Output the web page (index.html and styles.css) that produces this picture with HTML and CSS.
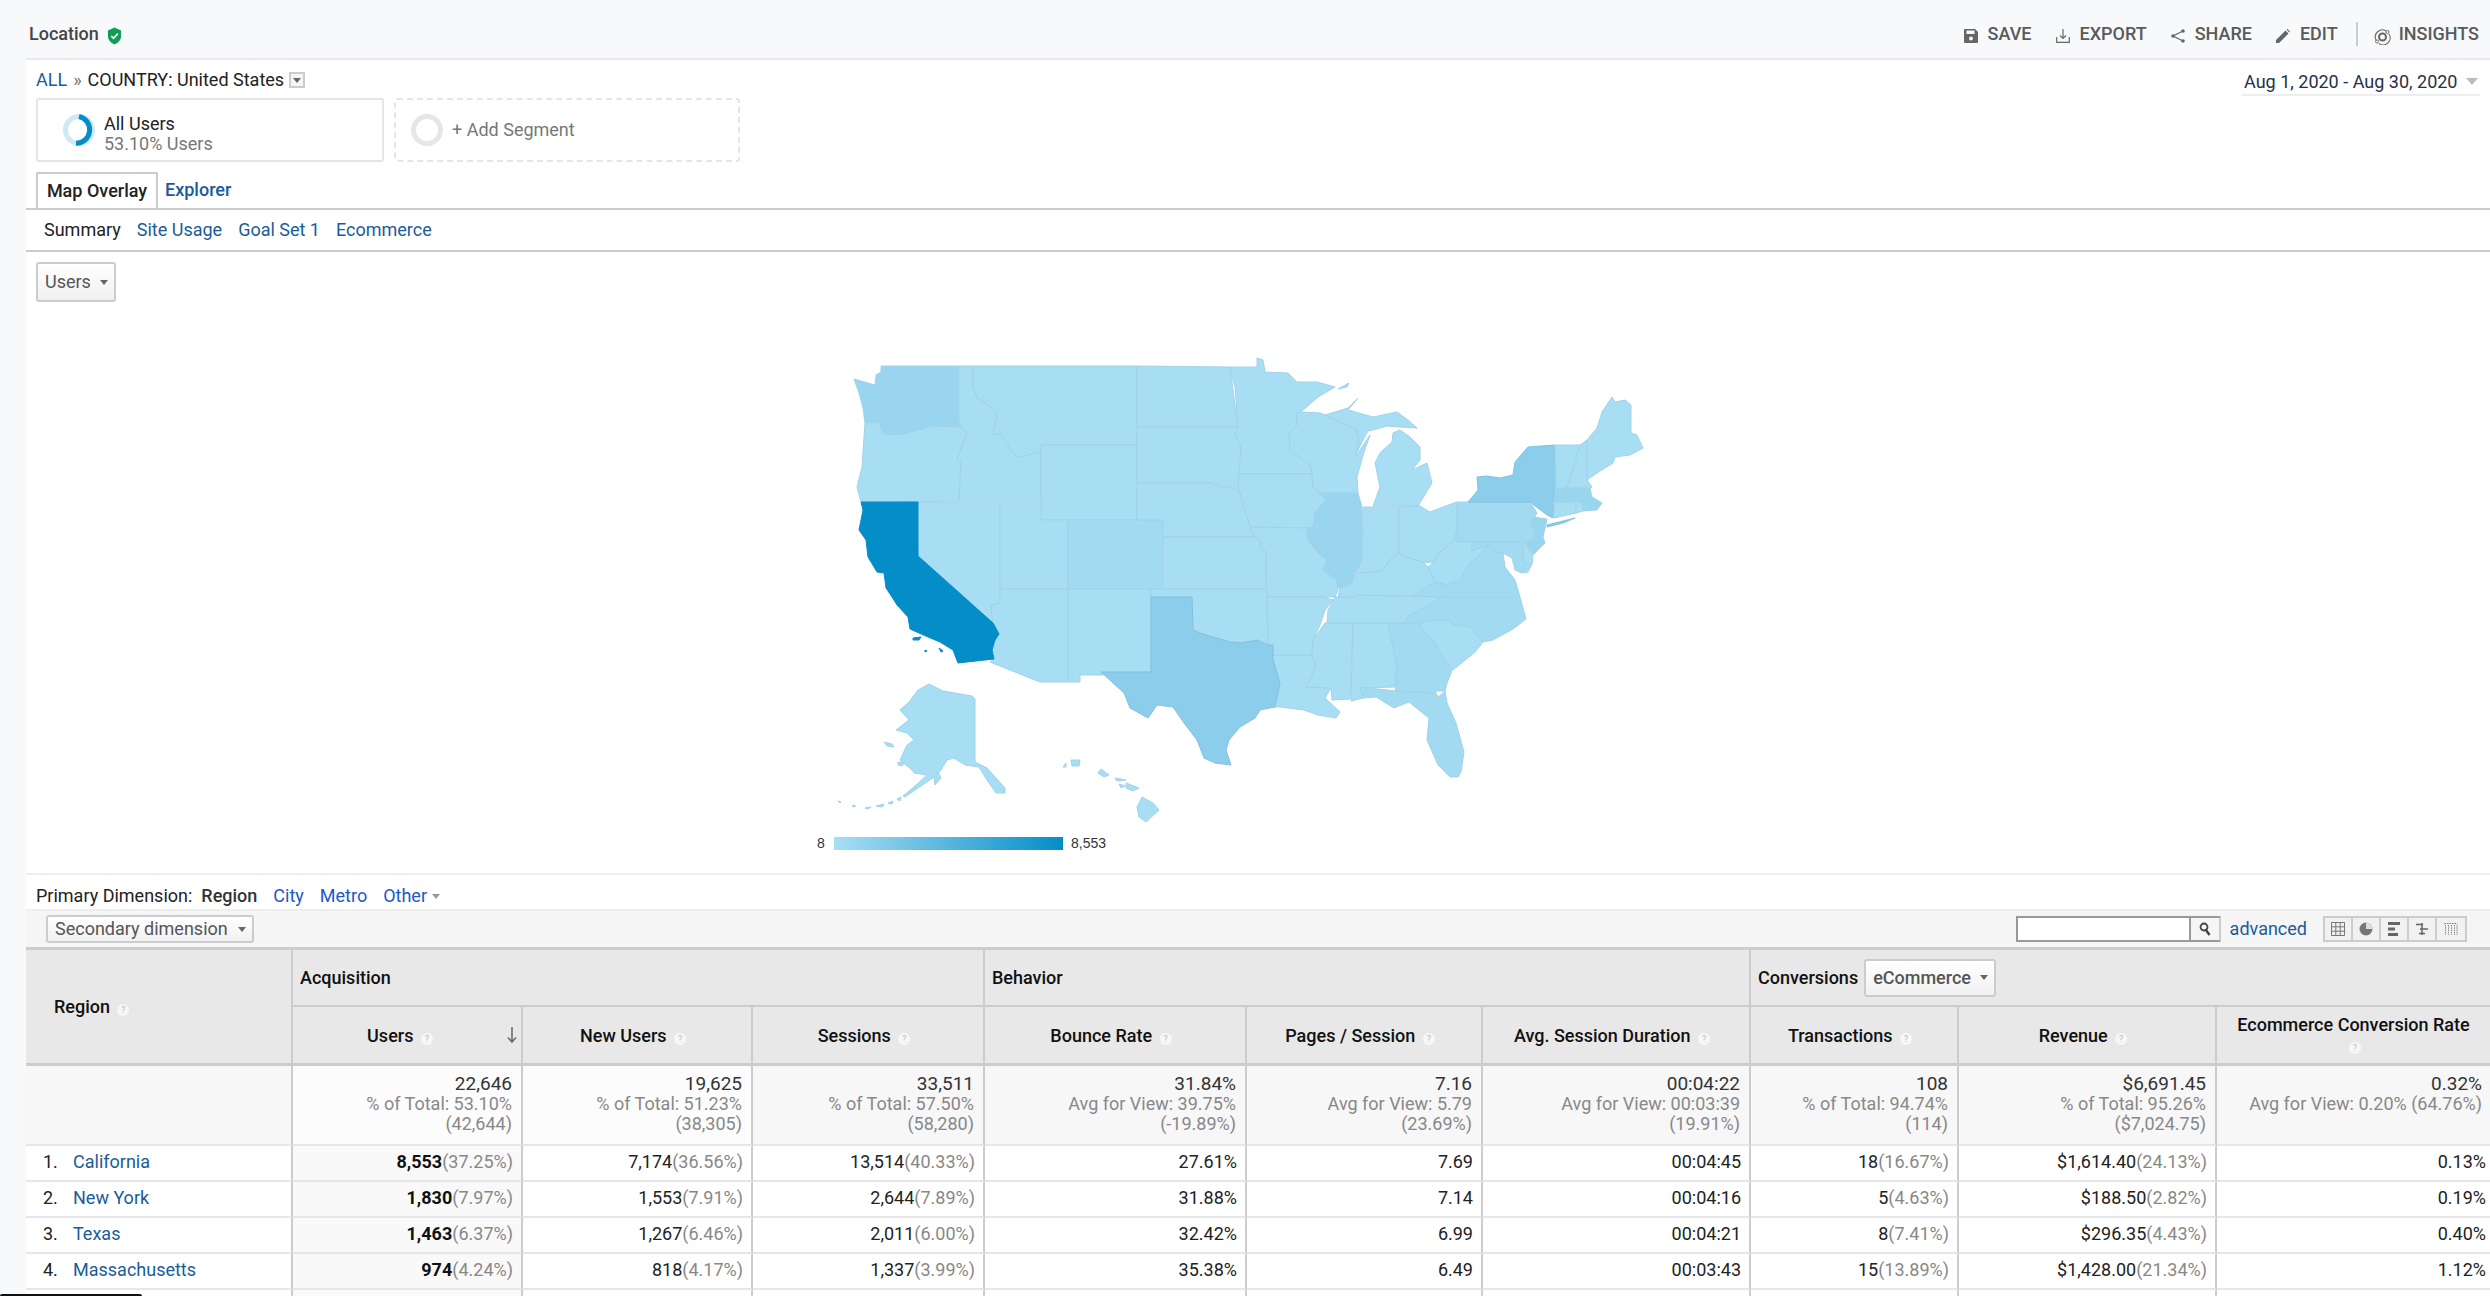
FILE: index.html
```html
<!DOCTYPE html>
<html lang="en">
<head>
<meta charset="utf-8">
<title>Location</title>
<link rel="stylesheet" href="styles.css">
</head>
<body>
<div class="page">
  <aside class="rail"></aside>
  <main class="main">
    <header class="topbar">
      <div class="title">Location
        <svg class="shield" viewBox="0 0 16 18"><path d="M8 0 15 3v6c0 4-3 7.500-7 9-4-1.500-7-5-7-9V3z" fill="#0f9d58"/><path d="m4.500 9 2.500 2.500L11.500 6.500" fill="none" stroke="#fff" stroke-width="1.800"/></svg>
      </div>
      <nav class="actions">
        <span class="action"><svg class="ico" viewBox="0 0 14 14"><path d="M1 0h10l3 3v10a1 1 0 0 1-1 1H1a1 1 0 0 1-1-1V1a1 1 0 0 1 1-1z" fill="#666"/><rect x="2.500" y="1.500" width="8" height="3.500" fill="#f8f9fa"/><circle cx="7" cy="9.500" r="2" fill="#f8f9fa"/></svg>SAVE</span>
        <span class="action"><svg class="ico" viewBox="0 0 14 14"><path d="M7 0v9M4 6.500l3 3 3-3M.7 8v5.300h12.600V8" fill="none" stroke="#666" stroke-width="1.200"/></svg>EXPORT</span>
        <span class="action"><svg class="ico" viewBox="0 0 14 14"><path d="M12 2 2 7l10 5" fill="none" stroke="#666" stroke-width="1.300"/><circle cx="12" cy="2" r="1.800" fill="#666"/><circle cx="2" cy="7" r="1.800" fill="#666"/><circle cx="12" cy="12" r="1.800" fill="#666"/></svg>SHARE</span>
        <span class="action"><svg class="ico" viewBox="0 0 14 14"><path d="M0 14V11L9.500 1.500l3 3L3 14zM10.500.500l1-.5 2.500 2.500-.5 1z" fill="#666"/></svg>EDIT</span>
        <span class="divider"></span>
        <span class="action insights"><svg class="ico big" viewBox="0 0 17 17"><circle cx="8.500" cy="9" r="3.500" fill="none" stroke="#666" stroke-width="2"/><path d="M2 12A7 7 0 0 1 12 3M15 6a7 7 0 0 1-10 9.500" fill="none" stroke="#666" stroke-width="1.100"/><circle cx="13.500" cy="4" r="1.500" fill="none" stroke="#666"/><circle cx="3" cy="13.500" r="1.500" fill="none" stroke="#666"/></svg>INSIGHTS</span>
      </nav>
    </header>

    <section class="context">
      <div class="context-left">
        <div class="crumb"><a class="link">ALL</a><span class="raquo">»</span><span>COUNTRY: United States</span><span class="crumb-drop"><i class="caret"></i></span></div>
        <div class="segments">
          <div class="segment">
            <svg class="ring" viewBox="0 0 32 34"><circle cx="16" cy="17" r="13.500" fill="none" stroke="#cfe9f5" stroke-width="5"/><path d="M16 3.500A13.500 13.500 0 0 1 13 30.200" fill="none" stroke="#058dc7" stroke-width="5"/></svg>
            <div class="seg-text"><div>All Users</div><div class="muted">53.10% Users</div></div>
          </div>
          <div class="segment dashed">
            <svg class="ring" viewBox="0 0 32 34"><circle cx="16" cy="17" r="13.500" fill="none" stroke="#e6e6e6" stroke-width="5"/></svg>
            <div class="muted">+ Add Segment</div>
          </div>
        </div>
      </div>
      <div class="date"><span>Aug 1, 2020 - Aug 30, 2020</span><i class="date-caret"></i></div>
    </section>

    <div class="tabs"><span class="tab active">Map Overlay</span><span class="tab link">Explorer</span></div>
    <div class="subtabs"><span>Summary</span><a class="link">Site Usage</a><a class="link">Goal Set 1</a><a class="link">Ecommerce</a></div>

    <section class="map-panel">
      <button class="btn metric">Users<i class="caret"></i></button>
      <svg class="map" viewBox="800 340 860 520" width="860" height="520">
        <defs><linearGradient id="scale"><stop offset="0" stop-color="#a8def4"/><stop offset="1" stop-color="#058dc7"/></linearGradient></defs>
        <g class="states">
          <polygon class="c2" points="959,366 959,420 961,427 933,426 903,434 888,435 882,432 879,423 865,423 863,408 859,393 854,379 875,385 876,375 881,372 881,366"/>
          <polygon points="865,423 879,423 882,432 888,435 903,434 933,426 961,427 967,434 957,458 961,463 959,501 861,502 857,487 862,467 864,437"/>
          <polygon points="918,502 1000,502 1000,603 991,605 993,623 918,556"/>
          <polygon points="959,366 973,366 973,387 978,399 988,405 997,415 993,435 1000,433 1010,448 1017,457 1033,454 1037,451 1041,455 1041,501 959,501 961,463 957,458 967,434 961,427 959,420"/>
          <polygon points="973,366 1137,366 1137,445 1041,445 1041,455 1037,451 1033,454 1017,457 1010,448 1000,433 993,435 997,415 988,405 978,399 973,387"/>
          <polygon points="1041,445 1137,445 1137,520 1041,520"/>
          <polygon points="1000,502 1041,502 1041,520 1068,520 1068,589 1000,589"/>
          <polygon class="c1" points="1068,520 1163,520 1163,589 1068,589"/>
          <polygon points="1000,589 1068,589 1068,682 1040,682 990,662 994,659 992,650 995,640 999,634 993,623 991,605 1000,603"/>
          <polygon points="1068,589 1151,589 1151,672 1102,672 1103,675 1080,675 1080,682 1068,682"/>
          <polygon points="1137,366 1230,367 1232,383 1237,420 1238,427 1137,427"/>
          <polygon points="1137,427 1238,427 1235,435 1241,440 1241,474 1238,487 1240,493 1230,487 1220,487 1212,483 1137,483"/>
          <polygon points="1137,483 1212,483 1220,487 1230,487 1240,493 1247,513 1255,537 1163,537 1163,520 1137,520"/>
          <polygon points="1163,537 1255,537 1262,542 1260,547 1266,552 1266,589 1163,589"/>
          <polygon points="1151,589 1266,589 1267,600 1268,645 1257,640 1242,643 1230,642 1213,637 1200,633 1193,630 1192,597 1151,597"/>
          <polygon points="1273,655 1312,655 1316,667 1306,687 1331,688 1325,698 1340,712 1336,718 1318,715 1304,710 1280,707 1275,707 1280,683 1273,660"/>
          <polygon points="1232,377 1230,367 1257,367 1257,358 1263,360 1265,372 1288,373 1297,382 1317,382 1335,387 1318,397 1301,412 1297,413 1297,425 1289,433 1290,450 1310,465 1312,474 1239,474 1241,447 1235,433 1238,427 1235,387"/>
          <polygon points="1239,474 1312,474 1313,487 1326,500 1315,512 1313,527 1307,528 1250,527 1245,510 1240,493 1238,485"/>
          <polygon points="1250,527 1307,528 1308,540 1320,555 1327,560 1323,570 1337,580 1338,590 1335,597 1328,597 1325,606 1323,597 1267,597 1266,552 1260,547 1262,542 1255,537"/>
          <polygon points="1267,597 1323,597 1333,600 1325,610 1320,625 1313,640 1312,655 1273,655 1273,645 1268,645"/>
          <polygon points="1325,623 1353,623 1350,699 1332,700 1331,688 1306,687 1316,667 1312,655 1313,640"/>
          <polygon points="1353,623 1388,623 1397,668 1395,687 1360,688 1363,698 1351,701"/>
          <polygon class="c1" points="1388,623 1420,622 1423,630 1433,640 1443,657 1453,668 1447,683 1445,691 1436,691 1435,695 1396,691 1395,687 1397,668"/>
          <polygon points="1418,623 1433,620 1450,620 1453,625 1470,626 1483,642 1475,652 1453,670 1443,657 1433,640 1423,630"/>
          <polygon class="c1" points="1442,597 1520,597 1526,619 1513,629 1493,640 1483,642 1470,626 1453,625 1450,620 1433,620 1418,623 1405,623 1408,616 1427,606"/>
          <polygon points="1327,623 1405,623 1408,616 1427,606 1442,597 1355,595 1354,597 1335,597 1328,610"/>
          <polygon points="1338,597 1355,597 1354,595 1413,596 1430,585 1435,582 1428,567 1423,562 1407,557 1399,553 1390,560 1383,570 1373,572 1357,573 1350,585 1340,588"/>
          <polygon class="c2" points="1320,493 1358,493 1362,507 1362,558 1357,570 1350,585 1340,588 1338,588 1337,580 1323,570 1327,560 1320,555 1308,540 1307,528 1313,527 1315,512 1326,500"/>
          <polygon points="1297,413 1301,412 1320,413 1325,415 1357,430 1359,440 1356,456 1370,435 1363,455 1357,477 1358,493 1320,493 1313,487 1312,474 1310,465 1290,450 1289,433 1297,425"/>
          <polygon points="1325,415 1348,408 1358,398 1348,410 1373,417 1397,412 1408,420 1417,428 1400,427 1387,426 1373,430 1368,431 1363,440 1356,454 1359,440 1357,430"/>
          <polygon points="1393,433 1400,430 1410,437 1420,447 1420,460 1412,470 1427,463 1432,483 1418,506 1373,506 1380,487 1375,463 1380,453 1392,442"/>
          <polygon points="1338,389 1349,383 1347,387"/>
          <polygon points="1363,507 1399,507 1399,553 1390,560 1383,570 1373,572 1357,573 1362,558"/>
          <polygon points="1399,507 1420,506 1430,512 1443,507 1457,502 1457,527 1455,540 1440,552 1433,563 1423,562 1407,557 1399,553"/>
          <polygon class="c1" points="1457,502 1468,502 1530,502 1537,513 1531,523 1536,537 1530,542 1457,542"/>
          <polygon class="c3" points="1468,502 1478,490 1477,477 1487,476 1500,478 1513,475 1515,462 1528,447 1555,445 1556,473 1553,518 1547,515 1530,502"/>
          <polygon class="c3" points="1547,525 1575,518 1563,523 1547,527"/>
          <polygon points="1457,527 1457,542 1472,542 1472,551 1487,545 1478,557 1470,563 1460,580 1447,585 1435,582 1428,567 1433,563 1440,552 1455,540"/>
          <polygon class="c1" points="1487,545 1495,552 1503,553 1505,567 1515,580 1520,597 1442,597 1413,596 1430,585 1435,582 1447,585 1460,580 1470,563 1478,557"/>
          <polygon class="c1" points="1472,542 1522,542 1524,563 1532,564 1528,572 1522,573 1515,570 1512,558 1503,553 1495,552 1487,544 1472,551"/>
          <polygon points="1523,542 1525,542 1533,557 1532,564 1524,563"/>
          <polygon class="c2" points="1533,517 1547,519 1543,537 1545,543 1533,555 1525,543 1536,537 1531,523"/>
          <polygon points="1554,502 1576,502 1576,513 1554,518"/>
          <polygon points="1576,502 1582,502 1583,511 1576,513"/>
          <polygon class="c2" points="1556,488 1590,488 1592,497 1602,503 1597,510 1583,511 1582,502 1554,502"/>
          <polygon points="1555,445 1580,445 1575,462 1567,488 1556,488"/>
          <polygon points="1580,445 1587,440 1587,480 1592,487 1590,488 1567,488 1575,462"/>
          <polygon points="1587,440 1597,428 1602,412 1612,397 1615,402 1625,400 1631,405 1631,433 1637,435 1643,448 1630,455 1615,457 1613,463 1597,473 1587,480"/>
          <polygon class="c1" points="1360,687 1396,691 1436,693 1438,697 1445,691 1447,703 1456,723 1464,752 1461,772 1458,777 1450,777 1438,765 1427,740 1429,718 1409,702 1394,708 1376,697 1363,698"/>
          <polygon class="c3" points="1151,597 1192,597 1193,630 1200,633 1213,637 1230,642 1242,643 1257,640 1268,645 1273,645 1273,660 1280,683 1275,707 1260,710 1255,718 1240,727 1229,740 1226,750 1231,765 1215,763 1204,758 1197,740 1184,723 1173,707 1157,705 1148,718 1130,708 1124,693 1101,672 1151,672"/>
          <polygon class="ca" points="861,502 918,502 918,556 993,623 999,634 995,640 992,650 994,659 958,663 953,650 940,642 928,637 910,629 908,617 897,605 892,597 886,588 884,573 877,572 868,557 866,540 859,530 863,510"/>
          <polygon class="ca" points="913,638 921,637 919,640 913,640"/><polygon class="ca" points="939,648 943,651 941,652"/><polygon class="ca" points="925,650 927,651 925,652"/>
          <polygon points="929,684 943,691 972,696 975,699 975,762 987,768 1005,788 1005,793 996,793 987,780 979,767 965,765 954,758 947,760 941,770 934,777 918,788 905,797 903,796 915,786 927,775 914,773 912,770 900,760 907,745 914,740 907,733 896,730 909,720 900,710 909,702 918,690"/>
          <polygon points="884,742 892,744 894,747 887,746"/><polygon points="898,762 904,763 902,766 898,765"/><polygon points="938,772 941,778 935,785 934,778"/>
          <polygon points="897,799 901,797 900,801"/><polygon points="888,803 893,801 892,804"/><polygon points="876,806 884,804 882,807"/><polygon points="865,808 871,807 868,809"/><polygon points="852,806 855,805 855,807"/><polygon points="838,801 841,802 840,803"/>
          <polygon points="1142,797 1153,803 1159,810 1146,822 1139,817 1137,807"/><polygon points="1126,783 1139,788 1133,791 1126,788"/><polygon points="1115,778 1126,780 1117,781"/><polygon points="1119,784 1125,786 1121,788"/><polygon points="1101,769 1109,775 1104,777 1098,773"/><polygon points="1071,760 1080,760 1079,766 1072,766"/><polygon points="1063,767 1066,763 1066,767"/>
        </g>
        <rect x="834" y="837" width="229" height="13" fill="url(#scale)"/>
        <text class="legend" x="817" y="848">8</text>
        <text class="legend" x="1071" y="848">8,553</text>
      </svg>
    </section>

    <div class="primary"><span>Primary Dimension:</span><b>Region</b><a class="dim">City</a><a class="dim">Metro</a><a class="dim">Other<i class="caret small"></i></a></div>

    <div class="toolbar">
      <button class="btn secondary">Secondary dimension<i class="caret"></i></button>
      <div class="tools">
        <div class="search"><span class="search-input"></span><span class="search-btn"><svg viewBox="0 0 12 14" class="lens"><circle cx="5" cy="5" r="3.500" fill="none" stroke="#444" stroke-width="1.800"/><path d="m7 8 3.500 5" stroke="#444" stroke-width="2.400"/></svg></span></div>
        <a class="link">advanced</a>
        <div class="views">
          <span class="view"><svg viewBox="0 0 14 14"><path d="M.5.500h13v13H.5zM.5 4.800h13M.5 9.200h13M4.800.500v13M9.200.500v13" fill="none" stroke="#777"/></svg></span>
          <span class="view"><svg viewBox="0 0 14 14"><circle cx="7" cy="7" r="6.500" fill="#777"/><path d="M7 .500V7h6.500A6.500 6.500 0 0 0 7 .500z" fill="#ddd"/></svg></span>
          <span class="view"><svg viewBox="0 0 14 14"><path d="M1 0h12v3H1zM1 5.500h7v3H1zM1 11h10v3H1z" fill="#666"/></svg></span>
          <span class="view"><svg viewBox="0 0 14 14"><path d="M1 2.500h7M5 7h8M4 11.500h6M7 1v6M7 7v6" fill="none" stroke="#666" stroke-width="1.500"/></svg></span>
          <span class="view"><svg viewBox="0 0 14 14"><path d="M.5 1.500h13" stroke="#777" stroke-dasharray="1.500 1"/><path d="M1.500 3v10M4.500 3v10M7.500 3v10M10.500 3v10M13 3v10" stroke="#888" stroke-dasharray="1.500 .8" fill="none"/></svg></span>
        </div>
      </div>
    </div>

    <table class="report">
      <colgroup><col class="w267"><col class="w230"><col class="w230"><col class="w232"><col class="w262"><col class="w236"><col class="w268"><col class="w208"><col class="w258"><col class="w273"></colgroup>
      <thead>
        <tr class="group">
          <th rowspan="2" class="region-h">Region <i class="help">?</i></th>
          <th colspan="3" class="g">Acquisition</th>
          <th colspan="3" class="g">Behavior</th>
          <th colspan="3" class="g"><div class="conv"><span>Conversions</span><button class="btn ecom">eCommerce<i class="caret"></i></button></div></th>
        </tr>
        <tr class="metrics">
          <th class="sorted">Users <i class="help">?</i><svg class="arrow" viewBox="0 0 10 16"><path d="M5 0v15M1 10.500 5 15l4-4.500" fill="none" stroke="#666" stroke-width="1.500"/></svg></th>
          <th>New Users <i class="help">?</i></th>
          <th>Sessions <i class="help">?</i></th>
          <th>Bounce Rate <i class="help">?</i></th>
          <th>Pages / Session <i class="help">?</i></th>
          <th>Avg. Session Duration <i class="help">?</i></th>
          <th>Transactions <i class="help">?</i></th>
          <th>Revenue <i class="help">?</i></th>
          <th class="wrap">Ecommerce Conversion Rate<br><i class="help">?</i></th>
        </tr>
      </thead>
      <tbody>
        <tr class="totals">
          <td class="blank"></td>
          <td class="lite"><div class="big-n">22,646</div>% of Total: 53.10%<br>(42,644)</td>
          <td class="lite"><div class="big-n">19,625</div>% of Total: 51.23%<br>(38,305)</td>
          <td><div class="big-n">33,511</div>% of Total: 57.50%<br>(58,280)</td>
          <td><div class="big-n">31.84%</div>Avg for View: 39.75%<br>(-19.89%)</td>
          <td><div class="big-n">7.16</div>Avg for View: 5.79<br>(23.69%)</td>
          <td><div class="big-n">00:04:22</div>Avg for View: 00:03:39<br>(19.91%)</td>
          <td><div class="big-n">108</div>% of Total: 94.74%<br>(114)</td>
          <td><div class="big-n">$6,691.45</div>% of Total: 95.26%<br>($7,024.75)</td>
          <td class="top"><div class="big-n">0.32%</div>Avg for View: 0.20% (64.76%)</td>
        </tr>
        <tr>
          <td class="name"><span class="rank">1.</span><a class="link">California</a></td>
          <td class="sort"><b>8,553</b><s>(37.25%)</s></td><td>7,174<s>(36.56%)</s></td><td>13,514<s>(40.33%)</s></td><td>27.61%</td><td>7.69</td><td>00:04:45</td><td>18<s>(16.67%)</s></td><td>$1,614.40<s>(24.13%)</s></td><td>0.13%</td>
        </tr>
        <tr>
          <td class="name"><span class="rank">2.</span><a class="link">New York</a></td>
          <td class="sort"><b>1,830</b><s>(7.97%)</s></td><td>1,553<s>(7.91%)</s></td><td>2,644<s>(7.89%)</s></td><td>31.88%</td><td>7.14</td><td>00:04:16</td><td>5<s>(4.63%)</s></td><td>$188.50<s>(2.82%)</s></td><td>0.19%</td>
        </tr>
        <tr>
          <td class="name"><span class="rank">3.</span><a class="link">Texas</a></td>
          <td class="sort"><b>1,463</b><s>(6.37%)</s></td><td>1,267<s>(6.46%)</s></td><td>2,011<s>(6.00%)</s></td><td>32.42%</td><td>6.99</td><td>00:04:21</td><td>8<s>(7.41%)</s></td><td>$296.35<s>(4.43%)</s></td><td>0.40%</td>
        </tr>
        <tr>
          <td class="name"><span class="rank">4.</span><a class="link">Massachusetts</a></td>
          <td class="sort"><b>974</b><s>(4.24%)</s></td><td>818<s>(4.17%)</s></td><td>1,337<s>(3.99%)</s></td><td>35.38%</td><td>6.49</td><td>00:03:43</td><td>15<s>(13.89%)</s></td><td>$1,428.00<s>(21.34%)</s></td><td>1.12%</td>
        </tr>
        <tr><td class="name"></td><td class="sort"></td><td></td><td></td><td></td><td></td><td></td><td></td><td></td><td></td></tr>
      </tbody>
    </table>
  </main>
</div>
<div class="home-bar"></div>
</body>
</html>
```
FILE: styles.css
```css
* { box-sizing: border-box; }
html, body { margin: 0; height: 100%; overflow: hidden; background: #fff; }
body { font: 18px/20px Roboto, "Liberation Sans", sans-serif; color: #222; }
.page { display: flex; width: 2490px; height: 1296px; overflow: hidden; }
.rail { width: 26px; flex: none; background: #f8f9fa; }
.main { flex: 1; min-width: 0; }
.link { color: #1a5c9b; }
.muted { color: #777; }
i { font-style: normal; }

.topbar { height: 60px; background: #f8f9fa; border-bottom: 2px solid #e8eaed; display: flex; justify-content: space-between; align-items: center; padding: 14px 11px 4px 3px; }
.title { font-weight: 500; color: #444; display: flex; align-items: center; gap: 8px; }
.shield { width: 15px; height: 18px; margin-top: 4px; }
.actions { display: flex; align-items: center; gap: 24px; font-weight: 500; color: #5a5a5a; }
.action { display: flex; align-items: center; gap: 10px; }
.ico { width: 14px; height: 14px; margin-top: 4px; }
.ico.big { width: 17px; height: 17px; }
.insights { gap: 8px; margin-left: -8px; }
.divider { width: 2px; height: 24px; background: #ccc; margin-left: -6px; }

.context { height: 112px; display: flex; justify-content: space-between; padding: 10px 10px 0 10px; }
.crumb { display: flex; align-items: center; height: 20px; color: #222; }
.raquo { color: #777; margin: 0 6px 0 6px; }
.crumb-drop { width: 16px; height: 16px; border: 2px solid #ccc; margin-left: 5px; display: flex; align-items: center; justify-content: center; background: #f5f5f5; }
.caret { display: inline-block; border: 4px solid transparent; border-top: 5px solid #666; border-bottom: 0; }
.caret.small { border-top-color: #999; margin-left: 5px; vertical-align: 3px; }
.segments { display: flex; gap: 10px; margin-top: 8px; }
.segment { width: 348px; height: 64px; border: 2px solid #e5e5e5; border-radius: 3px; display: flex; align-items: center; gap: 9px; padding-left: 25px; }
.segment.dashed { width: 346px; border-style: dashed; padding-left: 15px; }
.seg-text { margin-top: 8px; }
.ring { width: 32px; height: 34px; flex: none; }
.date { display: flex; align-items: flex-start; gap: 9px; height: 26px; width: 238px; padding: 2px 0 0 2px; border-bottom: 2px solid #eee; color: #263145; white-space: nowrap; }
.date-caret { border: 6px solid transparent; border-top: 7px solid #bbb; border-bottom: 0; margin-top: 6px; }

.tabs { height: 36px; display: flex; border-bottom: 2px solid #ccc; padding-left: 10px; gap: 7px; box-sizing: content-box; }
.tab { height: 36px; display: flex; align-items: center; font-weight: 500; }
.tab.active { width: 122px; justify-content: center; border: 2px solid #ccc; border-bottom: 0; background: #fff; color: #222; border-radius: 2px 2px 0 0; }
.subtabs { height: 40px; box-sizing: content-box; border-bottom: 2px solid #ccc; display: flex; align-items: center; padding-left: 18px; gap: 16px; }

.map-panel { height: 623px; border-bottom: 2px solid #eee; padding: 10px 0 0 10px; }
.btn { font: inherit; color: #555; background: linear-gradient(#fff, #f1f1f1); border: 2px solid #ccc; border-radius: 3px; display: inline-flex; align-items: center; justify-content: space-between; padding: 0 6px 0 7px; }
.btn.metric { width: 80px; height: 40px; display: flex; }
.map { display: block; margin: 38px 0 0 764px; }
.states polygon { fill: #a8def4; stroke: #a0d3e8; stroke-width: 1; stroke-linejoin: round; }
.states .c1 { fill: #a2daf2; }
.states .c2 { fill: #9ad5f0; }
.states .c3 { fill: #8bcdeb; stroke: #82c2df; }
.states .ca { fill: #058dc7; stroke: #058dc7; }
.legend { font: 14px "Liberation Sans", Arial, sans-serif; fill: #333; }

.primary { height: 34px; display: flex; align-items: center; padding: 8px 0 0 10px; color: #222; }
.primary b { font-weight: 500; margin: 0 16px 0 9px; color: #333; }
.dim { color: #1e58c8; margin-right: 16px; }

.toolbar { height: 38px; background: #f5f5f5; border-top: 2px solid #eee; display: flex; justify-content: space-between; align-items: center; padding: 0 23px 0 20px; }
.btn.secondary { width: 208px; height: 28px; color: #555; }
.tools { display: flex; align-items: center; }
.search { display: flex; width: 205px; height: 26px; border: 2px solid #999; border-right: 2px solid #ccc; background: #fff; border-bottom-color: #999; }
.search-input { flex: 1; }
.search-btn { width: 30px; background: #f5f5f5; border-left: 2px solid #999; display: flex; align-items: center; justify-content: center; }
.lens { width: 12px; height: 14px; }
.tools .link { margin: 0 16px 0 9px; }
.views { display: flex; height: 26px; border: 2px solid #ccc; }
.view { width: 28px; display: flex; align-items: center; justify-content: center; border-right: 2px solid #ccc; background: #f1f1f1; }
.view:last-child { border-right: 0; }
.view svg { width: 14px; height: 14px; }

.report { width: 2464px; table-layout: fixed; border-collapse: separate; border-spacing: 0; border-top: 3px solid #ccc; }
.w267 { width: 267px; } .w230 { width: 230px; } .w232 { width: 232px; } .w262 { width: 262px; } .w236 { width: 236px; } .w268 { width: 268px; } .w208 { width: 208px; } .w258 { width: 258px; } .w273 { width: 273px; }
.report th { background: #e8e8e8; font-weight: 500; color: #111; padding: 0; border-right: 2px solid #ccc; border-bottom: 2px solid #ccc; }
.report th:last-child { border-right: 0; }
.group th { height: 57px; }
.group .g { text-align: left; padding-left: 7px; }
.conv { display: flex; align-items: center; gap: 6px; }
.btn.ecom { width: 132px; height: 38px; }
.region-h { text-align: left; padding-left: 28px !important; border-bottom-width: 3px !important; }
.metrics th { height: 59px; border-bottom-width: 3px; padding: 2px 8px 0 0; position: relative; line-height: 20px; }
.metrics .sorted { padding-right: 14px; }
.metrics .wrap { padding: 0; }
.arrow { position: absolute; right: 4px; top: 20px; width: 10px; height: 16px; }
.help { display: inline-block; width: 12px; height: 12px; border-radius: 50%; background: #f7f7f7; color: #bbb; font-size: 9px; line-height: 12px; font-weight: 400; text-align: center; vertical-align: 0; margin-left: 3px; }
.report td { height: 36px; text-align: right; padding: 0 8px 2px 0; border-right: 2px solid #ccc; border-bottom: 2px solid #e6e6e6; color: #222; white-space: nowrap; }
.report td:last-child { border-right: 0; padding-right: 4px; }
.report s { text-decoration: none; color: #888; }
.report b { font-weight: 700; color: #111; }
.totals td { height: 80px; background: #f7f7f7; color: #888; padding-right: 9px; vertical-align: top; padding-top: 8px; }
.totals td:last-child { padding-right: 8px; }
.totals .lite { background: #fcfcfc; }
.big-n { color: #333; font-size: 19px; }
.report td.name { text-align: left; padding-left: 17px; }
.rank { display: inline-block; width: 30px; }
.sort { background: #f9f9f9; }
.home-bar { position: fixed; left: 0; bottom: 0; width: 142px; height: 2px; background: #111; border-radius: 2px 2px 0 0; }
```
